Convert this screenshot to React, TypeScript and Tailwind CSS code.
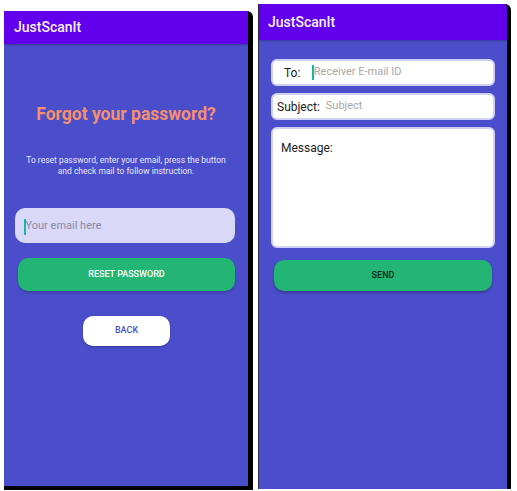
export default function App() {
  return (
    <div className="flex h-[491px] w-[517px] items-start overflow-hidden bg-white font-['Roboto',sans-serif]">
      {/* forgot password screen */}
      <div className="ml-[4px] mt-[11px] flex h-[479px] w-[249px] flex-col overflow-hidden rounded-tr-[6px] border-b-[4px] border-r-[5px] border-black bg-[#4a4ecb]">
        <div className="flex h-[33px] items-center bg-[#6200ee] pl-[10px] shadow-[0_1px_2px_rgba(0,0,0,0.25)]">
          <span className="text-[14px] font-medium text-[#f4f0ff]">JustScanIt</span>
        </div>
        <div className="flex flex-col items-center">
          <h1 className="mt-[58px] text-[17.5px] font-bold leading-[24px] text-[#f68f6b]">
            Forgot your password?
          </h1>
          <p className="mt-[29px] text-center text-[8.5px] leading-[11px] text-[#e6e6f7]">
            To reset password, enter your email, press the button
            <br />
            and check mail to follow instruction.
          </p>
        </div>
        <div className="ml-[11px] mr-[13px] mt-[31px] flex h-[35px] items-center rounded-[10px] bg-[#d9d8f7] pl-[9px] pt-[2px]">
          <span className="h-[16px] w-[1.5px] bg-[#14b8a6]" />
          <span className="text-[11px] text-[#8a8aa8]">Your email here</span>
        </div>
        <button className="ml-[14px] mr-[13px] mt-[15px] flex h-[33px] items-center justify-center rounded-[10px] bg-[#22b573] text-[9px] font-medium text-white shadow-[0_2px_3px_rgba(0,0,0,0.2)]">
          RESET PASSWORD
        </button>
        <div className="flex justify-center">
          <button className="ml-[1px] mt-[25px] flex h-[30px] w-[87px] items-center justify-center rounded-[10px] bg-white text-[9px] font-medium text-[#4a4ecb] shadow-[0_1px_2px_rgba(0,0,0,0.25)]">
            BACK
          </button>
        </div>
      </div>

      {/* send mail screen */}
      <div className="ml-[5px] mt-[4px] flex h-[485px] w-[253px] flex-col overflow-hidden rounded-tr-[6px] border-l border-r-[4px] border-l-[#2a2a40] border-r-black bg-[#4a4ecb]">
        <div className="flex h-[36px] items-center bg-[#6200ee] pl-[9px] shadow-[0_1px_2px_rgba(0,0,0,0.25)]">
          <span className="text-[14px] font-medium text-[#f4f0ff]">JustScanIt</span>
        </div>
        <div className="mx-[12px] mt-[19px] flex h-[27px] items-center rounded-[6px] border-2 border-[#d0d0f4] bg-white pl-[11px]">
          <span className="text-[12px] text-[#222]">To:</span>
          <span className="ml-[12px] h-[15px] w-[1.5px] bg-[#14b8a6]" />
          <span className="text-[11px] text-[#a8a8a8]">Receiver E-mail ID</span>
        </div>
        <div className="mx-[12px] mt-[7px] flex h-[27px] items-center rounded-[6px] border-2 border-[#d0d0f4] bg-white pl-[4px]">
          <span className="text-[12px] text-[#222]">Subject:</span>
          <span className="ml-[6px] text-[11px] text-[#a8a8a8]">Subject</span>
        </div>
        <div className="mx-[12px] mt-[7px] h-[121px] rounded-[6px] border-2 border-[#d0d0f4] bg-white pl-[8px] pt-[6px]">
          <span className="text-[12px] text-[#222]">Message:</span>
        </div>
        <button className="mx-[15px] mt-[12px] flex h-[31px] items-center justify-center rounded-[10px] bg-[#22b573] text-[9px] font-medium text-[#10281c] shadow-[0_2px_3px_rgba(0,0,0,0.25)]">
          SEND
        </button>
      </div>
    </div>
  )
}
